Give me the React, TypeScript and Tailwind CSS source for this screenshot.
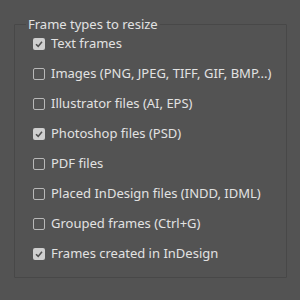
import React from "react";

const items: [string, boolean][] = [
  ["Text frames", true],
  ["Images (PNG, JPEG, TIFF, GIF, BMP...)", false],
  ["Illustrator files (AI, EPS)", false],
  ["Photoshop files (PSD)", true],
  ["PDF files", false],
  ["Placed InDesign files (INDD, IDML)", false],
  ["Grouped frames (Ctrl+G)", false],
  ["Frames created in InDesign", true],
];

function Box({ checked }: { checked: boolean }) {
  if (checked) {
    return (
      <span className="w-[12px] h-[12px] rounded-[2px] bg-[#cfcfcf] flex items-center justify-center shrink-0">
        <svg width="10" height="10" viewBox="0 0 10 10">
          <path d="M2 5.2 L4.2 7.4 L8 2.8" fill="none" stroke="#505050" strokeWidth="1.6" />
        </svg>
      </span>
    );
  }
  return <span className="w-[12px] h-[12px] rounded-[2px] border border-[#b8b8b8] shrink-0" />;
}

export default function App() {
  return (
    <div className="w-[300px] h-[300px] bg-[#535353] pt-[16px] pl-[14px]" style={{ fontFamily: '"Noto Sans", sans-serif' }}>
      <fieldset className="w-[273px] h-[262px] border border-[#484848] rounded-[1px]">
        <legend className="ml-[11px] px-[2px] text-[13px] leading-[16px] text-[#e2e2e2]">Frame types to resize</legend>
        <div className="flex flex-col pl-[18px] -mt-[3px]">
          {items.map(([label, c]) => (
            <div key={label} className="h-[30px] flex items-center gap-[6px] text-[13px] text-[#e2e2e2]">
              <Box checked={c} />
              <span>{label}</span>
            </div>
          ))}
        </div>
      </fieldset>
    </div>
  );
}
